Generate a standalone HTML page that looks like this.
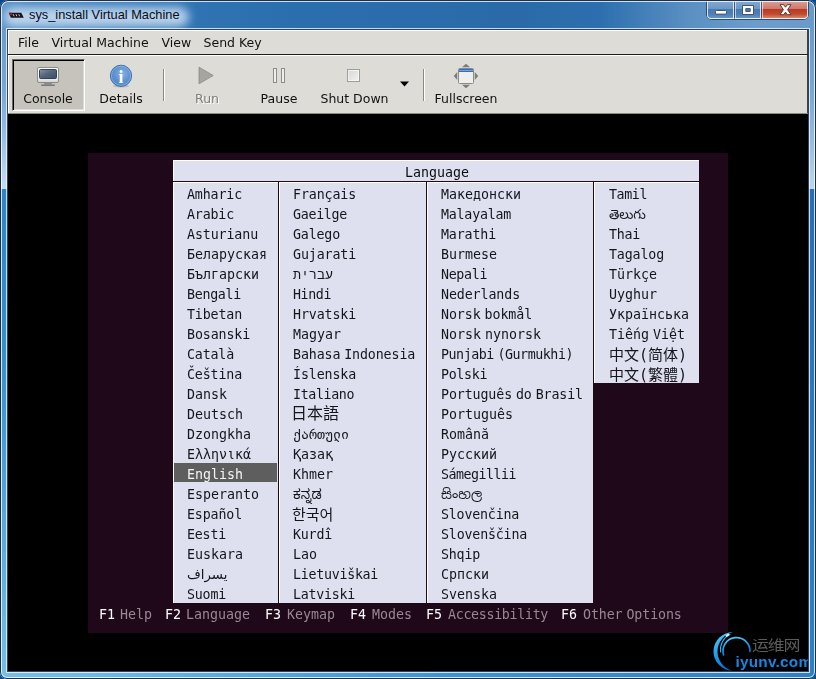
<!DOCTYPE html>
<html lang="en">
<head>
<meta charset="utf-8">
<title>sys_install Virtual Machine</title>
<style>
html,body{margin:0;padding:0;}
body{width:816px;height:679px;overflow:hidden;background:#0c4788;position:relative;font-family:"DejaVu Sans","Liberation Sans",sans-serif;}
.abs{position:absolute;}
#win{position:absolute;left:0;top:0;width:816px;height:679px;border-radius:8px 8px 7px 7px;overflow:hidden;background:#2b6fae;}
/* frame pieces */
#tbar{position:absolute;left:0;top:0;width:816px;height:30px;
 background:linear-gradient(90deg,#5e94c9 0px,#4a86c0 30px,#2f73b3 200px,#2b6eae 300px,#2a6aa9 520px,#2d6fae 600px,#5b90c3 690px,#6d9dcc 760px,#6a9aca 816px);}
#tglow{position:absolute;left:4px;top:7px;width:185px;height:20px;border-radius:10px;background:rgba(200,222,242,.88);filter:blur(5px);}
#ttext{position:absolute;left:29px;top:7px;font:12.8px "Liberation Sans","DejaVu Sans",sans-serif;color:#0a0a14;white-space:pre;line-height:16px;}
#lframe{position:absolute;left:0;top:30px;width:8px;height:649px;
 background:linear-gradient(180deg,#6c9bcd 0px,#79a6d4 60px,#9dc0e2 110px,#c8ddf0 159px,#2b86c8 159.5px,#3590ce 320px,#74bfe8 649px);}
#rframe{position:absolute;left:808px;top:30px;width:8px;height:649px;
 background:linear-gradient(180deg,#6c9bcd 0px,#79a6d4 60px,#98bbdf 110px,#bfd6ec 159px,#2a6cb5 159.5px,#2d76bd 320px,#2f7fc5 649px);}
#bframe{position:absolute;left:0;top:671px;width:816px;height:8px;
 background:linear-gradient(90deg,#74bfe8 0px,#6cb9e5 100px,#4ea3da 300px,#3d93d2 450px,#2f7fc5 816px);}
#outline{position:absolute;left:0;top:0;width:814px;height:677px;border:1px solid #16324f;border-radius:8px 8px 7px 7px;box-shadow:inset 0 0 0 1px rgba(255,255,255,.78);pointer-events:none;}
#client{will-change:transform;position:absolute;left:8px;top:30px;width:800px;height:641px;background:#000;box-shadow:0 0 0 1px rgba(14,38,72,.85),0 0 0 2px rgba(240,247,253,.8);}
#wbtns{position:absolute;left:707px;top:0;width:101px;height:19px;border-radius:0 0 5px 5px;box-shadow:0 0 0 1px rgba(30,50,80,.75);}
.wb{position:absolute;top:0;height:19px;box-sizing:border-box;border:1px solid rgba(255,255,255,.78);border-top:none;box-shadow:inset 0 0 0 0 #000;}
.wb+.wb{border-left:1px solid rgba(40,60,90,.7);box-shadow:inset 1px 0 0 rgba(255,255,255,.6);}
/* menubar */
#menubar{position:absolute;left:0;top:0;width:799px;height:24px;background:#dedcd6;border-right:1px solid #44423e;box-shadow:inset 1px 1px 0 #fff;}
#menubar span{position:absolute;top:5px;font-size:12.5px;line-height:15px;color:#111;white-space:pre;}
#mline{position:absolute;left:0;top:24px;width:800px;height:1px;background:#1e1d1b;}
#toolbar{position:absolute;left:0;top:25px;width:799px;height:58px;background:#dedcd6;border-right:1px solid #44423e;box-shadow:inset 1px 1px 0 #fff;}
#tbot{position:absolute;left:0;top:83px;width:800px;height:1px;background:#8d8b85;}
.tl{position:absolute;top:36px;font-size:12.5px;line-height:15px;color:#111;white-space:pre;transform:translateX(-50%);}
.sep{position:absolute;width:1px;height:32px;background:#8c8982;box-shadow:1px 0 0 #fff;}
#wm{position:absolute;left:700px;top:596px;width:100px;height:46px;overflow:hidden;}
/* vm */
#vm{will-change:transform;position:absolute;left:88px;top:153px;width:640px;height:480px;background:#20081b;overflow:hidden;}
.mono{font-family:"DejaVu Sans Mono","Liberation Mono","Noto Sans CJK SC",monospace;font-size:13.3px;line-height:20px;white-space:pre;word-spacing:-4px;}
.panel{position:absolute;background:#dfe0ef;box-shadow:inset 1px 1px 0 #fff;}
.rows div{position:absolute;height:20px;color:#15151c;}
.cjk{font-size:15px;}
.jp{font-size:16px;margin:-1px 0 0 -2px;}
.kr{margin-left:-1px;}
.fa{unicode-bidi:bidi-override;direction:ltr;font-family:"DejaVu Sans","DejaVu Sans Mono",sans-serif;}
.indic{font-family:"DejaVu Sans Mono","Noto Sans Telugu","Noto Sans Kannada","Noto Sans Sinhala",monospace;}
.fk{position:absolute;top:451.5px;color:#fff;}
.fl{position:absolute;top:451.5px;color:#978892;}
</style>
</head>
<body>
<div id="win">
 <div id="tbar"></div>
 <div id="lframe"></div><div id="rframe"></div><div id="bframe"></div>
 <div id="tglow"></div>
 <svg class="abs" style="left:8px;top:12px" width="17" height="7" viewBox="0 0 17 7"><path d="M.8 .8h12.4l2.6 5h-13z" fill="#1b1016"/><path d="M.8 .8h3l.9 2.4h-2.8z" fill="#9a1630"/><path d="M5.2 2.2l.8 2M8 2.2l.8 2M10.8 2.2l.8 2" stroke="#d8d8dc" stroke-width=".9"/></svg>
 <div id="ttext">sys_install Virtual Machine</div>
 <div id="wbtns">
  <div class="wb" style="left:0;width:27px;border-radius:0 0 0 4px;background:linear-gradient(180deg,#86abd3 0%,#6c98c6 48%,#487ab1 52%,#4d80b6 80%,#6595c6 100%)"></div>
  <div class="wb" style="left:27px;width:27px;background:linear-gradient(180deg,#86abd3 0%,#6c98c6 48%,#487ab1 52%,#4d80b6 80%,#6595c6 100%)"></div>
  <div class="wb" style="left:54px;width:47px;border-radius:0 0 4px 0;background:linear-gradient(180deg,#dba59d 0%,#cd7a6c 48%,#b83a22 52%,#c24a2e 78%,#d4866a 100%)"></div>
  <svg class="abs" style="left:-1px;top:0" width="103" height="20" viewBox="0 0 103 20">
   <rect x="9.5" y="10.5" width="11" height="3.6" rx="1" fill="#fbfbfb" stroke="#43566e" stroke-width="1"/>
   <path d="M36.5 5.5h11v9h-11z M39.8 8.6v2.9h4.4v-2.9z" fill="#fbfbfb" fill-rule="evenodd" stroke="#43566e" stroke-width="1"/>
   <path d="M74.0 4.7L77.7 4.7L79.5 7.2L81.3 4.7L85.0 4.7L81.6 9.7L85.0 14.7L81.3 14.7L79.5 12.2L77.7 14.7L74.0 14.7L77.4 9.7z" fill="#fbfbfb" stroke="#5a3a3a" stroke-width="1" stroke-linejoin="round"/>
  </svg>
 </div>
 <div id="client">
  <div id="menubar"><span style="left:10px">File</span><span style="left:43.5px">Virtual Machine</span><span style="left:153.5px">View</span><span style="left:195.5px">Send Key</span></div>
  <div id="mline"></div>
  <div id="toolbar">
   <div class="abs" style="left:4px;top:4px;width:73px;height:52px;background:#c5c3bc;box-sizing:border-box;border-top:1px solid #6b6964;border-left:1px solid #6b6964;border-right:1px solid #fff;border-bottom:1px solid #fff;box-shadow:inset 1px 1px 0 #000, inset -1px -1px 0 #dedcd6;"></div>
   <svg class="abs" style="left:28px;top:11px" width="24" height="22" viewBox="0 0 24 22">
    <defs><linearGradient id="mb" x1="0" y1="0" x2="0" y2="1"><stop offset="0" stop-color="#fdfdfd"/><stop offset=".7" stop-color="#f2f2f2"/><stop offset="1" stop-color="#cfcfcd"/></linearGradient>
    <linearGradient id="ms" x1="0" y1="0" x2="1" y2="1"><stop offset="0" stop-color="#8b97a5"/><stop offset=".45" stop-color="#56677c"/><stop offset="1" stop-color="#3b4d65"/></linearGradient></defs>
    <rect x="1.5" y="1.5" width="21" height="15" rx="1.5" fill="url(#mb)" stroke="#8b8b89"/>
    <rect x="3.5" y="3.5" width="17" height="9" rx="1" fill="url(#ms)" stroke="#2e4361"/>
    <rect x="8" y="17" width="8" height="1.5" fill="#8a8a88"/>
    <rect x="5" y="18.5" width="14" height="1.6" rx=".8" fill="#777775"/>
   </svg>
   <div class="tl" style="left:40px">Console</div>
   <svg class="abs" style="left:101px;top:9px" width="24" height="24" viewBox="0 0 24 24">
    <defs><radialGradient id="ig" cx=".55" cy=".4" r=".65"><stop offset="0" stop-color="#8ab3e2"/><stop offset=".6" stop-color="#5a90cf"/><stop offset="1" stop-color="#4a82c6"/></radialGradient></defs>
    <ellipse cx="12" cy="22" rx="8" ry="1.5" fill="rgba(120,118,110,.35)"/>
    <circle cx="12" cy="11.8" r="10.6" fill="url(#ig)" stroke="#3c6eb4" stroke-width="1"/>
    <circle cx="12" cy="11.8" r="9.6" fill="none" stroke="rgba(255,255,255,.28)" stroke-width="1"/>
    <text x="11.9" y="18.8" text-anchor="middle" font-family="Liberation Serif,DejaVu Serif,serif" font-weight="bold" font-size="18" fill="#fff">i</text>
   </svg>
   <div class="tl" style="left:113px">Details</div>
   <div class="sep" style="left:155px;top:14px"></div>
   <svg class="abs" style="left:190px;top:11px" width="17" height="19" viewBox="0 0 17 19"><path d="M1 1.2L15.2 9.5L1 17.8z" fill="#a6a5a0" stroke="#8a8985" stroke-width=".8"/></svg>
   <div class="tl" style="left:199px;color:#7f7d78;text-shadow:1px 1px 0 #fff">Run</div>
   <div class="abs" style="left:265px;top:13px;width:4px;height:15px;box-sizing:border-box;border:1px solid #8c8c88;background:#efefed"></div>
   <div class="abs" style="left:273px;top:13px;width:4px;height:15px;box-sizing:border-box;border:1px solid #8c8c88;background:#efefed"></div>
   <div class="tl" style="left:271px">Pause</div>
   <div class="abs" style="left:339px;top:14px;width:13px;height:13px;box-sizing:border-box;border:1px solid #9d9d99;background:linear-gradient(135deg,#d6d8d3,#f3f3f1);box-shadow:inset 0 0 0 1px rgba(255,255,255,.6)"></div>
   <div class="tl" style="left:346.5px">Shut Down</div>
   <svg class="abs" style="left:391px;top:26px" width="11" height="6" viewBox="0 0 11 6"><path d="M1 .5h9L5.5 5.5z" fill="#000"/></svg>
   <div class="sep" style="left:415px;top:14px"></div>
   <svg class="abs" style="left:445px;top:8px" width="26" height="26" viewBox="0 0 26 26">
    <path d="M13 .8l4 3.4h-8z M13 25.2l4-3.4h-8z M.8 13l3.4-4v8z M25.2 13l-3.4-4v8z" fill="#7b7d79"/>
    <rect x="5.5" y="5.5" width="15" height="15" rx="1" fill="#eeeeec" stroke="#8a8a86"/>
    <rect x="6" y="6" width="14" height="3" fill="#3b6cb8"/>
    <rect x="6" y="7" width="14" height="1" fill="#6f9fe0"/>
   </svg>
   <div class="tl" style="left:458px">Fullscreen</div>
  </div>
  <div id="tbot"></div>
  <div id="wm">
   <svg class="abs" style="left:0;top:0" width="50" height="48" viewBox="708 626 50 48">
    <defs><linearGradient id="sw" x1="0" y1="0" x2=".3" y2="1"><stop offset="0" stop-color="#5ccdfa"/><stop offset=".5" stop-color="#27a4ee"/><stop offset="1" stop-color="#0a74d0"/></linearGradient></defs>
    <path d="M733 632.2A19 19.2 0 0 0 732 670.6A19.8 19.8 0 0 1 733 632.2Z" fill="url(#sw)"/>
    <path d="M730 634.6A16.5 16.5 0 0 0 720.6 652" fill="none" stroke="#2fb0f3" stroke-width="1.1" stroke-linecap="round"/>
    <path d="M723.6 655A13.5 13.5 0 1 1 750 651.5" fill="none" stroke="url(#sw)" stroke-width="1.7" stroke-linecap="round"/>
    <ellipse cx="727.5" cy="635.2" rx="2.2" ry="1" transform="rotate(-32 727.5 635.2)" fill="#fff" opacity=".9"/>
   </svg>
   <div class="abs" style="left:44.3px;top:8.5px;font:15.6px/20px 'Noto Sans CJK SC','WenQuanYi Zen Hei',sans-serif;font-weight:400;color:#5c5c5c;white-space:pre;letter-spacing:-1.1px;transform:scale(1.085,.88);transform-origin:0 0">运维网</div>
   <div class="abs" style="left:27.5px;top:27px;font:bold 15.3px/18px 'Liberation Sans',sans-serif;color:#1787e2;white-space:pre;letter-spacing:.25px">iyunv.com</div>
  </div>
 </div>
 <div id="vm" class="mono">
   <div class="panel" style="left:85px;top:7px;width:526px;height:21px"></div>
   <div class="abs lang" style="left:86px;top:10px;width:526px;height:21px;text-align:center;color:#0c0c10">Language</div>
   <div class="panel" style="left:85px;top:29px;width:105px;height:421px"></div>
   <div class="panel" style="left:191px;top:29px;width:147px;height:421px"></div>
   <div class="panel" style="left:339px;top:29px;width:166px;height:421px"></div>
   <div class="panel" style="left:506px;top:29px;width:105px;height:201px"></div>
   <div class="abs" style="left:86px;top:310px;width:103px;height:19px;background:#5e5e5e"></div>
   <div class="abs" style="left:99px;top:312px;height:20px;color:#f4f4f4">English</div>
   <div class="rows">
    <div style="left:99px;top:32px;letter-spacing:-0.14px">Amharic</div>
    <div style="left:99px;top:52px;letter-spacing:-0.17px">Arabic</div>
    <div style="left:99px;top:72px;letter-spacing:-0.11px">Asturianu</div>
    <div style="left:99px;top:92px">Беларуская</div>
    <div style="left:99px;top:112px">Български</div>
    <div style="left:99px;top:132px;letter-spacing:-0.29px">Bengali</div>
    <div style="left:99px;top:152px;letter-spacing:-0.14px">Tibetan</div>
    <div style="left:99px;top:172px;letter-spacing:-0.12px">Bosanski</div>
    <div style="left:99px;top:192px;letter-spacing:-0.17px">Català</div>
    <div style="left:99px;top:212px;letter-spacing:-0.14px">Čeština</div>
    <div style="left:99px;top:232px">Dansk</div>
    <div style="left:99px;top:252px">Deutsch</div>
    <div style="left:99px;top:272px">Dzongkha</div>
    <div style="left:99px;top:292px">Ελληνικά</div>
    <div style="left:99px;top:332px">Esperanto</div>
    <div style="left:99px;top:352px;letter-spacing:-0.14px">Español</div>
    <div style="left:99px;top:372px;letter-spacing:-0.20px">Eesti</div>
    <div style="left:99px;top:392px">Euskara</div>
    <div style="left:99px;top:412px" dir="ltr" class="fa">فارسی</div>
    <div style="left:99px;top:432px;letter-spacing:-0.20px">Suomi</div>
    <div style="left:205px;top:32px;letter-spacing:-0.12px">Français</div>
    <div style="left:205px;top:52px;letter-spacing:-0.29px">Gaeilge</div>
    <div style="left:205px;top:72px;letter-spacing:-0.17px">Galego</div>
    <div style="left:205px;top:92px;letter-spacing:-0.12px">Gujarati</div>
    <div style="left:205px;top:112px">עברית</div>
    <div style="left:205px;top:132px;letter-spacing:-0.40px">Hindi</div>
    <div style="left:205px;top:152px;letter-spacing:-0.12px">Hrvatski</div>
    <div style="left:205px;top:172px">Magyar</div>
    <div style="left:205px;top:192px;letter-spacing:-0.12px">Bahasa Indonesia</div>
    <div style="left:205px;top:212px;letter-spacing:-0.12px">Íslenska</div>
    <div style="left:205px;top:232px;letter-spacing:-0.38px">Italiano</div>
    <div style="left:205px;top:252px" class="cjk jp">日本語</div>
    <div style="left:205px;top:272px">ქართული</div>
    <div style="left:205px;top:292px">Қазақ</div>
    <div style="left:205px;top:312px">Khmer</div>
    <div style="left:205px;top:332px" class="indic">ಕನ್ನಡ</div>
    <div style="left:205px;top:352px" class="cjk kr">한국어</div>
    <div style="left:205px;top:372px;letter-spacing:-0.20px">Kurdî</div>
    <div style="left:205px;top:392px">Lao</div>
    <div style="left:205px;top:412px;letter-spacing:-0.27px">Lietuviškai</div>
    <div style="left:205px;top:432px;letter-spacing:-0.25px">Latviski</div>
    <div style="left:353px;top:32px">Македонски</div>
    <div style="left:353px;top:52px;letter-spacing:-0.22px">Malayalam</div>
    <div style="left:353px;top:72px;letter-spacing:-0.14px">Marathi</div>
    <div style="left:353px;top:92px">Burmese</div>
    <div style="left:353px;top:112px;letter-spacing:-0.33px">Nepali</div>
    <div style="left:353px;top:132px;letter-spacing:-0.10px">Nederlands</div>
    <div style="left:353px;top:152px;letter-spacing:-0.08px">Norsk bokmål</div>
    <div style="left:353px;top:172px">Norsk nynorsk</div>
    <div style="left:353px;top:192px;letter-spacing:-0.45px">Punjabi (Gurmukhi)</div>
    <div style="left:353px;top:212px;letter-spacing:-0.33px">Polski</div>
    <div style="left:353px;top:232px;letter-spacing:-0.11px">Português do Brasil</div>
    <div style="left:353px;top:252px">Português</div>
    <div style="left:353px;top:272px">Română</div>
    <div style="left:353px;top:292px">Русский</div>
    <div style="left:353px;top:312px;letter-spacing:-0.50px">Sámegillii</div>
    <div style="left:353px;top:332px" class="indic">සිංහල</div>
    <div style="left:353px;top:352px;letter-spacing:-0.20px">Slovenčina</div>
    <div style="left:353px;top:372px;letter-spacing:-0.18px">Slovenščina</div>
    <div style="left:353px;top:392px;letter-spacing:-0.20px">Shqip</div>
    <div style="left:353px;top:412px">Српски</div>
    <div style="left:353px;top:432px">Svenska</div>
    <div style="left:521px;top:32px;letter-spacing:-0.40px">Tamil</div>
    <div style="left:521px;top:52px" class="indic">తెలుగు</div>
    <div style="left:521px;top:72px;letter-spacing:-0.25px">Thai</div>
    <div style="left:521px;top:92px;letter-spacing:-0.14px">Tagalog</div>
    <div style="left:521px;top:112px">Türkçe</div>
    <div style="left:521px;top:132px">Uyghur</div>
    <div style="left:521px;top:152px">Українська</div>
    <div style="left:521px;top:172px">Tiếng Việt</div>
    <div style="left:521px;top:192px" class="cjk sc">中文(简体)</div>
    <div style="left:521px;top:212px" class="cjk tc">中文(繁體)</div>
   </div>
   <div class="fk" style="left:11px">F1</div><div class="fl" style="left:32px">Help</div>
   <div class="fk" style="left:77px">F2</div><div class="fl" style="left:98px">Language</div>
   <div class="fk" style="left:177px">F3</div><div class="fl" style="left:199px">Keymap</div>
   <div class="fk" style="left:262px">F4</div><div class="fl" style="left:284px">Modes</div>
   <div class="fk" style="left:338px">F5</div><div class="fl" style="left:360px;letter-spacing:-.31px">Accessibility</div>
   <div class="fk" style="left:473px">F6</div><div class="fl" style="left:495px;letter-spacing:-.1px">Other Options</div>
  </div>
 <div id="outline"></div>
</div>
</body>
</html>
